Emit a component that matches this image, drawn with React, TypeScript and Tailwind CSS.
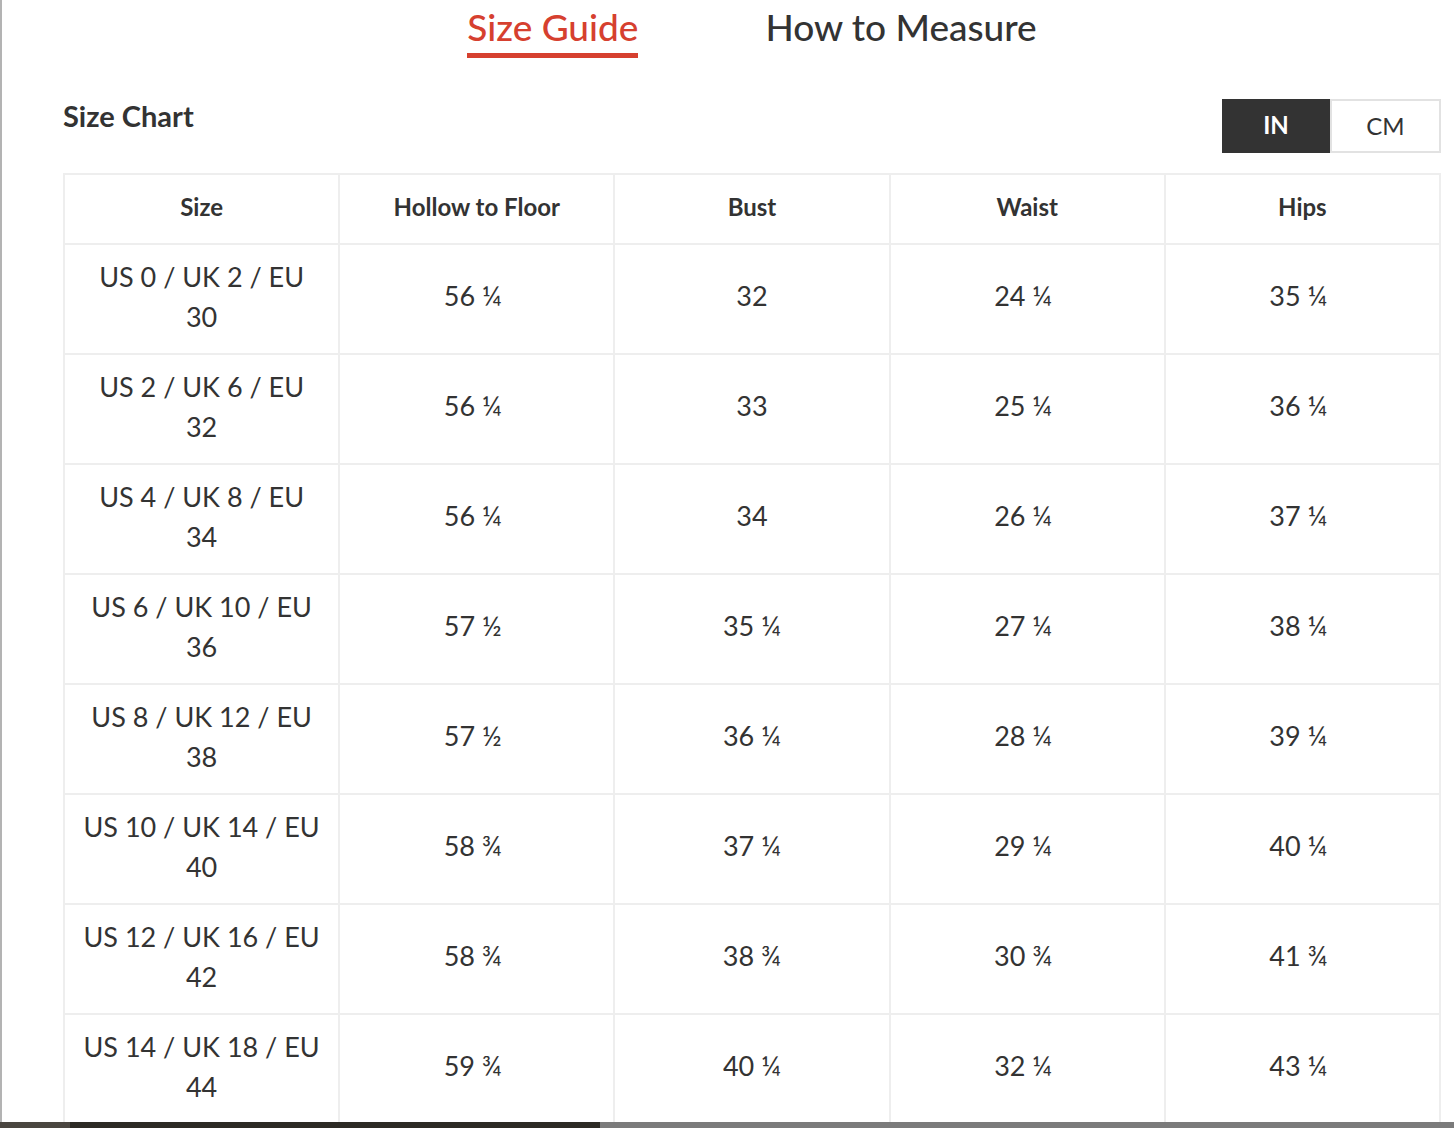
import React from "react";

const rows = [
  { size: ["US 0 / UK 2 / EU", "30"], hollow: "56 ¼", bust: "32", waist: "24 ¼", hips: "35 ¼" },
  { size: ["US 2 / UK 6 / EU", "32"], hollow: "56 ¼", bust: "33", waist: "25 ¼", hips: "36 ¼" },
  { size: ["US 4 / UK 8 / EU", "34"], hollow: "56 ¼", bust: "34", waist: "26 ¼", hips: "37 ¼" },
  { size: ["US 6 / UK 10 / EU", "36"], hollow: "57 ½", bust: "35 ¼", waist: "27 ¼", hips: "38 ¼" },
  { size: ["US 8 / UK 12 / EU", "38"], hollow: "57 ½", bust: "36 ¼", waist: "28 ¼", hips: "39 ¼" },
  { size: ["US 10 / UK 14 / EU", "40"], hollow: "58 ¾", bust: "37 ¼", waist: "29 ¼", hips: "40 ¼" },
  { size: ["US 12 / UK 16 / EU", "42"], hollow: "58 ¾", bust: "38 ¾", waist: "30 ¾", hips: "41 ¾" },
  { size: ["US 14 / UK 18 / EU", "44"], hollow: "59 ¾", bust: "40 ¼", waist: "32 ¼", hips: "43 ¼" },
];

const headers = ["Size", "Hollow to Floor", "Bust", "Waist", "Hips"];

const font = { fontFamily: "Lato, 'Noto Sans', sans-serif" };

const App = () => (
  <div className="w-[1454px] h-[1128px] flex flex-col bg-white overflow-hidden" style={font}>
    <div className="flex-1 min-h-0 overflow-hidden border-l-2 border-[#b3b3b3] pl-[61px] pr-[13px]">
      {/* tabs */}
      <div className="flex justify-center gap-[127px] h-[58px]">
        <div className="flex flex-col items-stretch">
          <span className="text-[37px] leading-none pt-[8px] text-[#d6402f] font-medium">Size Guide</span>
          <div className="mt-auto h-[5px] bg-[#d6402f]" />
        </div>
        <div className="flex flex-col">
          <span className="text-[37px] leading-none pt-[8px] text-[#333333] font-medium">How to Measure</span>
        </div>
      </div>

      {/* title + unit toggle */}
      <div className="flex justify-between items-start mt-[41px]">
        <h2 className="text-[29px] font-bold text-[#333333] leading-none mt-[2px]">Size Chart</h2>
        <div className="flex h-[54px]">
          <button className="w-[108px] h-full bg-[#333333] text-white font-bold text-[24px] pb-[2px]">IN</button>
          <button className="w-[111px] h-full border-2 border-[#e2e2e2] text-[#333333] text-[24px]">CM</button>
        </div>
      </div>

      {/* table */}
      <table className="mt-[20px] w-full table-fixed border-collapse text-[#333333]">
        <thead>
          <tr className="h-[70px]">
            {headers.map((h) => (
              <th key={h} className="border-2 border-[#eeeeee] text-[24px] font-bold text-center pb-[4px]">
                {h}
              </th>
            ))}
          </tr>
        </thead>
        <tbody>
          {rows.map((r) => (
            <tr key={r.size[0]} className="h-[110px] text-[27px]">
              <td className="border-2 border-[#eeeeee] text-center leading-[40px] pb-[4px]">
                <div>{r.size[0]}</div>
                <div>{r.size[1]}</div>
              </td>
              <td className="border-2 border-[#eeeeee] text-center pr-[8px] pb-[5px]">{r.hollow}</td>
              <td className="border-2 border-[#eeeeee] text-center pb-[5px]">{r.bust}</td>
              <td className="border-2 border-[#eeeeee] text-center pr-[8px] pb-[5px]">{r.waist}</td>
              <td className="border-2 border-[#eeeeee] text-center pr-[8px] pb-[5px]">{r.hips}</td>
            </tr>
          ))}
        </tbody>
      </table>
    </div>

    {/* page behind the modal */}
    <div className="h-[6px] flex shrink-0">
      <div className="w-[70px] bg-[#4a4640]" />
      <div className="w-[530px] bg-[#2c2a24]" />
      <div className="flex-1 bg-[#7b7b7b]" />
    </div>
  </div>
);

export default App;
